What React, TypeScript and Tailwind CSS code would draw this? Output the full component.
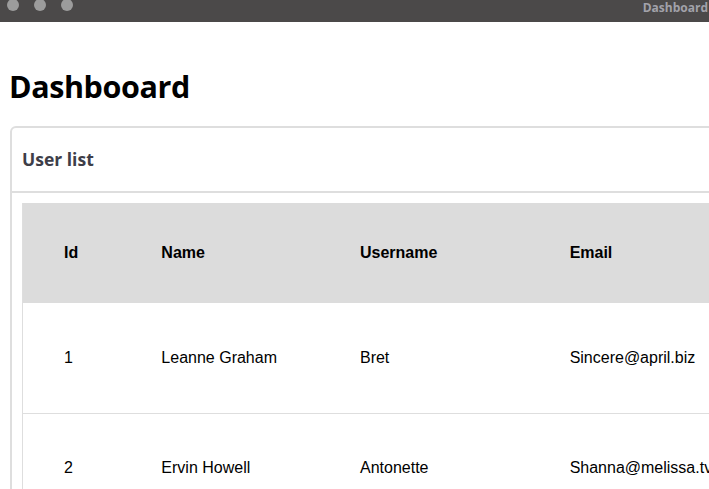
import React from 'react';

const USERS = [
  { id: 1, name: 'Leanne Graham', username: 'Bret', email: 'Sincere@april.biz' },
  { id: 2, name: 'Ervin Howell', username: 'Antonette', email: 'Shanna@melissa.tv' },
];

export default function App() {
  return (
    <div className="h-[489px] w-[709px] overflow-hidden bg-white">
      {/* window bar */}
      <div className="relative flex h-[22px] items-center bg-[#4b4949] pl-[7px]">
        <div className="flex -translate-y-[6px] gap-[15px]">
          <span className="block h-[12px] w-[12px] rounded-full bg-[#9c9c9c]" />
          <span className="block h-[12px] w-[12px] rounded-full bg-[#9c9c9c]" />
          <span className="block h-[12px] w-[12px] rounded-full bg-[#9c9c9c]" />
        </div>
        <span className="absolute right-[1px] top-[-1px] font-['Open_Sans',sans-serif] text-[12px] font-bold text-[#a2a2aa]">
          Dashboard
        </span>
      </div>

      <div className="w-[900px] pl-[9px] pt-[44px]">
        <h1 className="font-['Open_Sans',sans-serif] text-[30.5px] font-bold leading-[40px] tracking-[-0.4px] text-black">
          Dashbooard
        </h1>

        <div className="ml-[1px] mt-[20px] rounded-[6px] border-2 border-[#dedede]">
          <div className="flex h-[65px] items-center border-b-2 border-[#dedede] px-[10px]">
            <h2 className="font-['Open_Sans',sans-serif] text-[17.5px] font-bold text-[#3e3e48]">User list</h2>
          </div>
          <div className="p-[10px]">
            <table className="table-fixed border-collapse border-l border-[#dedede] font-['Liberation_Sans',Arial,sans-serif] text-[16px] text-black">
              <colgroup>
                <col className="w-[98px]" />
                <col className="w-[199px]" />
                <col className="w-[210px]" />
                <col className="w-[360px]" />
              </colgroup>
              <thead>
                <tr className="h-[100px] bg-[#dcdcdc]">
                  <th className="pl-[41px] text-left font-bold">Id</th>
                  <th className="pl-[41px] text-left font-bold">Name</th>
                  <th className="pl-[41px] text-left font-bold">Username</th>
                  <th className="pl-[41px] text-left font-bold">Email</th>
                </tr>
              </thead>
              <tbody>
                {USERS.map((u) => (
                  <tr key={u.id} className="h-[110px] border-b border-[#dedede]">
                    <td className="pl-[41px]">{u.id}</td>
                    <td className="pl-[41px]">{u.name}</td>
                    <td className="pl-[41px]">{u.username}</td>
                    <td className="pl-[41px]">{u.email}</td>
                  </tr>
                ))}
              </tbody>
            </table>
          </div>
        </div>
      </div>
    </div>
  );
}
